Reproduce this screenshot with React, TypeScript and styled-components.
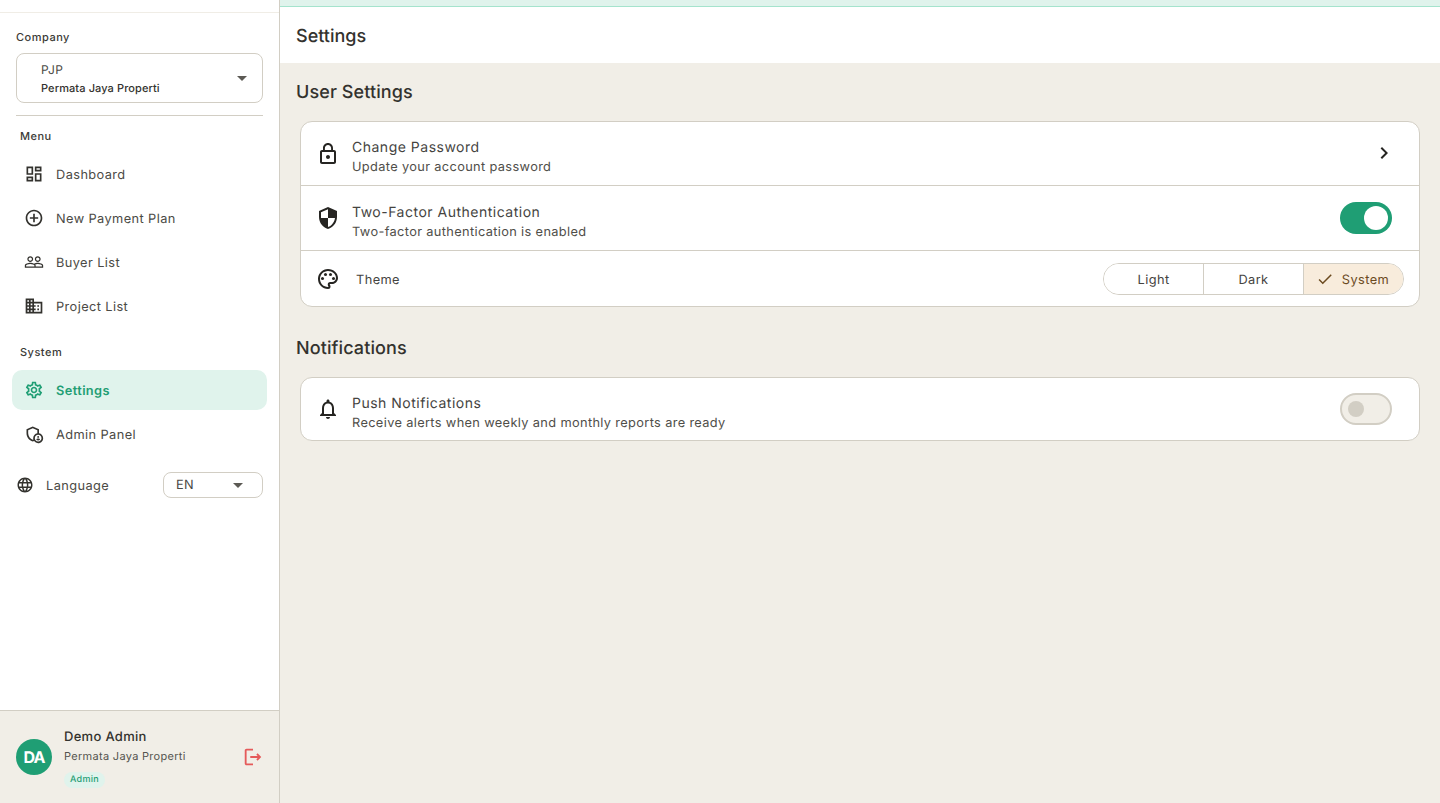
import * as React from "react";
import styled, { createGlobalStyle } from "styled-components";
import {
  MdOutlineDashboard,
  MdAddCircleOutline,
  MdPeopleOutline,
  MdOutlineDomain,
  MdOutlineSettings,
  MdOutlineAdminPanelSettings,
  MdLanguage,
  MdOutlineLogout,
  MdLockOutline,
  MdSecurity,
  MdOutlinePalette,
  MdNotificationsNone,
  MdChevronRight,
  MdCheck,
  MdArrowDropDown,
} from "react-icons/md";

const GlobalStyle = createGlobalStyle`
  html, body {
    margin: 0;
    padding: 0;
    height: 100%;
    background: #f1eee7;
  }
  body {
    font-family: Inter, "Liberation Sans", sans-serif;
    color: #262522;
    text-rendering: geometricPrecision;
  }
  * {
    box-sizing: border-box;
  }
`;

const menuItems = [
  { label: "Dashboard", icon: <MdOutlineDashboard /> },
  { label: "New Payment Plan", icon: <MdAddCircleOutline /> },
  { label: "Buyer List", icon: <MdPeopleOutline /> },
  { label: "Project List", icon: <MdOutlineDomain /> },
];

function App() {
  return (
    <Shell>
      <GlobalStyle />
      <Sidebar>
        <SidebarTop />
        <SidebarBody>
          <FieldLabel>Company</FieldLabel>
          <CompanySelect>
            <CompanyText>
              <CompanyCode>PJP</CompanyCode>
              <CompanyName>Permata Jaya Properti</CompanyName>
            </CompanyText>
            <Caret>
              <MdArrowDropDown />
            </Caret>
          </CompanySelect>
          <Divider />
          <SectionLabel>Menu</SectionLabel>
          {menuItems.map((item) => (
            <NavItem key={item.label}>
              <NavIcon>{item.icon}</NavIcon>
              <NavText>{item.label}</NavText>
            </NavItem>
          ))}
          <SectionLabel $system>System</SectionLabel>
          <ActiveNavItem>
            <NavIcon>
              <MdOutlineSettings />
            </NavIcon>
            <NavText>Settings</NavText>
          </ActiveNavItem>
          <NavItem>
            <NavIcon>
              <MdOutlineAdminPanelSettings />
            </NavIcon>
            <NavText>Admin Panel</NavText>
          </NavItem>
          <LanguageRow>
            <LanguageIcon>
              <MdLanguage />
            </LanguageIcon>
            <LanguageLabel>Language</LanguageLabel>
            <LanguageSelect>
              <span>EN</span>
              <Caret>
                <MdArrowDropDown />
              </Caret>
            </LanguageSelect>
          </LanguageRow>
        </SidebarBody>
        <Footer>
          <Avatar>DA</Avatar>
          <UserInfo>
            <UserName>Demo Admin</UserName>
            <UserCompany>Permata Jaya Properti</UserCompany>
            <RoleChip>Admin</RoleChip>
          </UserInfo>
          <LogoutIcon>
            <MdOutlineLogout />
          </LogoutIcon>
        </Footer>
      </Sidebar>
      <Main>
        <TopStrip />
        <PageHeader>Settings</PageHeader>
        <Content>
          <SectionTitle>User Settings</SectionTitle>
          <Card>
            <Row $height={63}>
              <RowIcon>
                <MdLockOutline />
              </RowIcon>
              <RowText $top={8}>
                <RowTitle>Change Password</RowTitle>
                <RowSub>Update your account password</RowSub>
              </RowText>
              <Chevron>
                <MdChevronRight />
              </Chevron>
            </Row>
            <Row $height={65}>
              <RowIcon>
                <MdSecurity />
              </RowIcon>
              <RowText $top={10}>
                <RowTitle>Two-Factor Authentication</RowTitle>
                <RowSub>Two-factor authentication is enabled</RowSub>
              </RowText>
              <Switch $on>
                <Thumb $on />
              </Switch>
            </Row>
            <Row $height={56}>
              <RowIcon>
                <MdOutlinePalette />
              </RowIcon>
              <ThemeLabel>Theme</ThemeLabel>
              <Segments>
                <Segment>
                  <SegmentText>Light</SegmentText>
                </Segment>
                <Segment>
                  <SegmentText>Dark</SegmentText>
                </Segment>
                <Segment $selected>
                  <MdCheck />
                  <SegmentText>System</SegmentText>
                </Segment>
              </Segments>
            </Row>
          </Card>
          <SectionTitle $second>Notifications</SectionTitle>
          <Card>
            <Row $height={62}>
              <RowIcon>
                <MdNotificationsNone />
              </RowIcon>
              <RowText $top={10}>
                <RowTitle>Push Notifications</RowTitle>
                <RowSub>Receive alerts when weekly and monthly reports are ready</RowSub>
              </RowText>
              <Switch>
                <Thumb />
              </Switch>
            </Row>
          </Card>
        </Content>
      </Main>
    </Shell>
  );
}

const Shell = styled.div`
  display: flex;
  width: 100%;
  height: 803px;
  overflow: hidden;
`;

const Sidebar = styled.aside`
  display: flex;
  flex-direction: column;
  flex: 0 0 280px;
  height: 100%;
  background: #fff;
  border-right: 1px solid #d2cec4;
`;

const SidebarTop = styled.div`
  height: 13px;
  border-bottom: 1px solid #f0ede6;
`;

const SidebarBody = styled.div`
  flex: 1;
  display: flex;
  flex-direction: column;
  padding: 16px 16px 0;
`;

const FieldLabel = styled.div`
  font-size: 11px;
  line-height: 16px;
  font-weight: 500;
  letter-spacing: 0.5px;
  color: #3b3a36;
  margin-bottom: 8px;
`;

const CompanySelect = styled.div`
  display: flex;
  align-items: center;
  height: 50px;
  padding: 0 8px 0 24px;
  border: 1px solid #d2cec4;
  border-radius: 8px;
`;

const CompanyText = styled.div`
  flex: 1;
  display: flex;
  flex-direction: column;
  gap: 2px;
  padding-top: 1px;
`;

const CompanyCode = styled.div`
  font-size: 12px;
  line-height: 16px;
  letter-spacing: 0.4px;
  color: #4b4a45;
`;

const CompanyName = styled.div`
  font-size: 11px;
  line-height: 16px;
  letter-spacing: 0.1px;
  font-weight: 500;
  color: #33322e;
`;

const Caret = styled.span`
  display: flex;
  font-size: 24px;
  color: #5c5a54;
`;

const Divider = styled.div`
  height: 1px;
  background: #d2cec4;
  margin-top: 12px;
`;

const SectionLabel = styled.div<{ $system?: boolean }>`
  font-size: 11px;
  line-height: 16px;
  font-weight: 500;
  letter-spacing: 0.5px;
  color: #3b3a36;
  padding-left: 4px;
  margin-top: ${(props) => (props.$system ? "16px" : "12px")};
  margin-bottom: ${(props) => (props.$system ? "10px" : "8px")};
`;

const NavItem = styled.div`
  display: flex;
  align-items: center;
  gap: 10px;
  height: 44px;
  margin: 0 -4px;
  padding: 0 10px;
  color: #4b4a45;
  border-radius: 10px;
`;

const ActiveNavItem = styled(NavItem)`
  height: 40px;
  margin-bottom: 2px;
  background: #e0f3ec;
  color: #1f9e74;
  font-weight: 600;
`;

const NavIcon = styled.span`
  display: flex;
  width: 24px;
  justify-content: center;
  font-size: 20px;
  color: #33322e;
  ${ActiveNavItem} & {
    color: #1f9e74;
  }
`;

const NavText = styled.span`
  margin-top: 3px;
  font-size: 12.8px;
  line-height: 20px;
  letter-spacing: 0.4px;
`;

const LanguageRow = styled.div`
  display: flex;
  align-items: center;
  margin-top: 16px;
`;

const LanguageIcon = styled.span`
  display: flex;
  font-size: 18px;
  color: #33322e;
`;

const LanguageLabel = styled.span`
  flex: 1;
  margin: 2px 0 0 12px;
  font-size: 12.8px;
  letter-spacing: 0.4px;
  color: #4b4a45;
`;

const LanguageSelect = styled.div`
  display: flex;
  align-items: center;
  justify-content: space-between;
  width: 100px;
  height: 26px;
  padding: 0 12px;
  border: 1px solid #d2cec4;
  border-radius: 8px;
  font-size: 12.8px;
  letter-spacing: 0.4px;
  color: #4b4a45;
`;

const Footer = styled.div`
  display: flex;
  align-items: center;
  height: 93px;
  padding: 0 16px;
  background: #f1eee7;
  border-top: 1px solid #d2cec4;
`;

const Avatar = styled.div`
  display: flex;
  align-items: center;
  justify-content: center;
  width: 36px;
  height: 36px;
  border-radius: 50%;
  background: #1f9e74;
  color: #fff;
  font-size: 16px;
  font-weight: 700;
  letter-spacing: -0.8px;
`;

const UserInfo = styled.div`
  flex: 1;
  display: flex;
  flex-direction: column;
  align-items: flex-start;
  margin-left: 12px;
`;

const UserName = styled.div`
  font-size: 13px;
  line-height: 20px;
  font-weight: 500;
  letter-spacing: 0.3px;
  color: #33322e;
`;

const UserCompany = styled.div`
  font-size: 11px;
  line-height: 16px;
  letter-spacing: 0.3px;
  color: #55544f;
  margin-top: 1px;
`;

const RoleChip = styled.div`
  font-size: 9px;
  line-height: 16px;
  font-weight: 500;
  letter-spacing: 0.3px;
  color: #1f9e74;
  background: #e0f3ec;
  padding: 0 6px;
  border-radius: 8px;
  margin-top: 8px;
`;

const LogoutIcon = styled.span`
  display: flex;
  font-size: 22px;
  margin-right: -1px;
  color: #e55a5a;
`;

const Main = styled.main`
  flex: 1;
  display: flex;
  flex-direction: column;
  min-width: 0;
`;

const TopStrip = styled.div`
  height: 7px;
  background: #e0f3ec;
  border-bottom: 1px solid #a5e3cd;
`;

const PageHeader = styled.div`
  display: flex;
  align-items: center;
  height: 56px;
  padding: 3px 16px 0;
  background: #fff;
  font-size: 18px;
  font-weight: 500;
  color: #33322e;
`;

const Content = styled.div`
  flex: 1;
  padding: 18px 20px 0 16px;
  background: #f1eee7;
`;

const SectionTitle = styled.h2<{ $second?: boolean }>`
  margin: ${(props) => (props.$second ? "30px" : "0")} 0 16px;
  font-size: 18px;
  line-height: 24px;
  font-weight: 500;
  letter-spacing: 0.1px;
  color: #33322e;
`;

const Card = styled.div`
  margin-left: 4px;
  background: #fff;
  border: 1px solid #d2cec4;
  border-radius: 12px;
  overflow: hidden;
`;

const Row = styled.div<{ $height: number }>`
  display: flex;
  align-items: center;
  height: ${(props) => props.$height}px;
  padding: 0 16px 0 15px;
  & + & {
    border-top: 1px solid #d2cec4;
  }
`;

const RowIcon = styled.span`
  display: flex;
  font-size: 24px;
  color: #262522;
`;

const RowText = styled.div<{ $top: number }>`
  flex: 1;
  margin-left: 12px;
  padding-top: ${(props) => props.$top}px;
`;

const RowTitle = styled.div`
  font-size: 14px;
  line-height: 20px;
  letter-spacing: 0.5px;
  color: #45443f;
`;

const RowSub = styled.div`
  font-size: 12.8px;
  line-height: 20px;
  letter-spacing: 0.35px;
  color: #4f4e49;
`;

const Chevron = styled.span`
  display: flex;
  font-size: 24px;
  margin: 0 7px 1px 0;
  color: #262522;
`;

const Switch = styled.div<{ $on?: boolean }>`
  display: flex;
  align-items: center;
  justify-content: ${(props) => (props.$on ? "flex-end" : "flex-start")};
  width: 52px;
  height: 32px;
  margin-right: 11px;
  padding: ${(props) => (props.$on ? "0 4px" : "0 6px")};
  border-radius: 16px;
  background: ${(props) => (props.$on ? "#1f9e74" : "#f1eee7")};
  border: ${(props) => (props.$on ? "none" : "2px solid #d2cec4")};
`;

const Thumb = styled.span<{ $on?: boolean }>`
  width: ${(props) => (props.$on ? "24px" : "16px")};
  height: ${(props) => (props.$on ? "24px" : "16px")};
  border-radius: 50%;
  background: ${(props) => (props.$on ? "#fff" : "#d2cec4")};
`;

const ThemeLabel = styled.div`
  flex: 1;
  margin: 3px 0 0 16px;
  font-size: 12.8px;
  letter-spacing: 0.4px;
  color: #45443f;
`;

const Segments = styled.div`
  display: flex;
  width: 301px;
  height: 32px;
  margin-right: -1px;
  border: 1px solid #d2cec4;
  border-radius: 16px;
  overflow: hidden;
`;

const Segment = styled.div<{ $selected?: boolean }>`
  flex: 0 0 100px;
  display: flex;
  align-items: center;
  justify-content: center;
  gap: 8px;
  padding-right: ${(props) => (props.$selected ? "2px" : "0")};
  font-size: 12.8px;
  letter-spacing: 0.4px;
  color: ${(props) => (props.$selected ? "#6b4a1f" : "#45443f")};
  background: ${(props) => (props.$selected ? "#f8ecdc" : "#fff")};
  &:first-child {
    flex-basis: 99px;
  }
  & + & {
    border-left: 1px solid #d2cec4;
  }
  svg {
    font-size: 18px;
  }
`;

const SegmentText = styled.span`
  margin-top: 3px;
`;

export default App;
